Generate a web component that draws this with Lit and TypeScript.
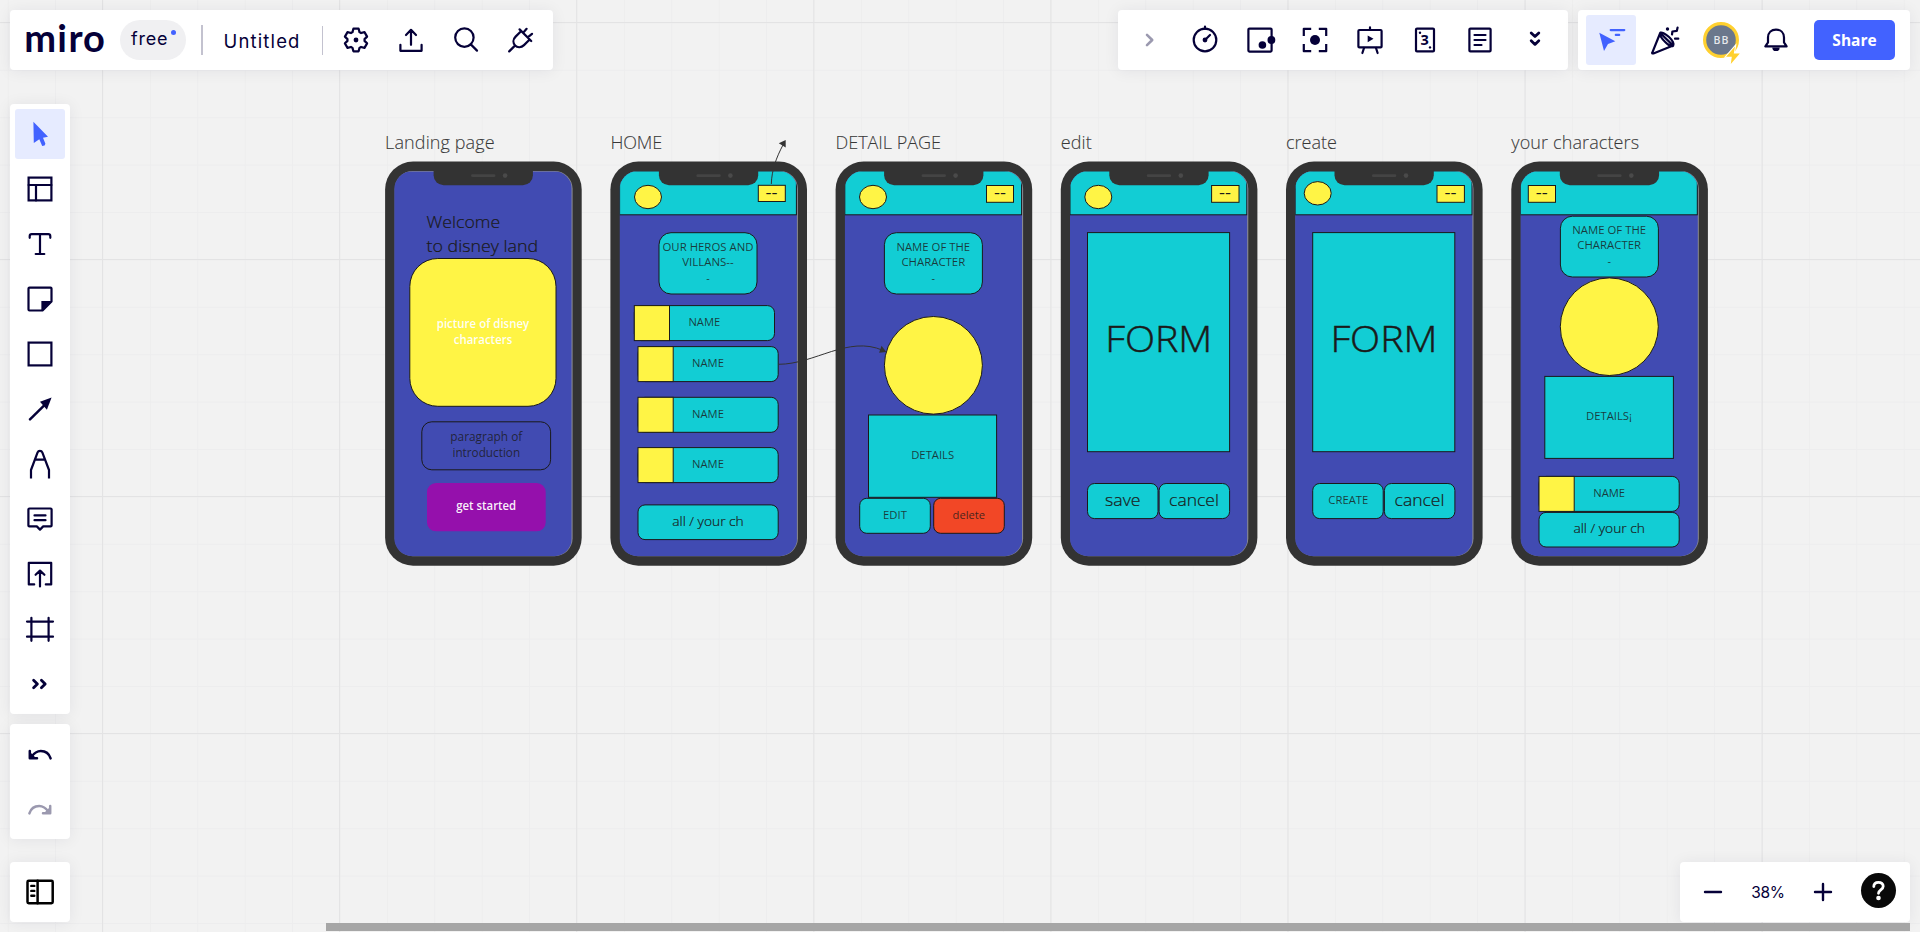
import { LitElement, html, svg, css, nothing } from "lit";
import { customElement } from "lit/decorators.js";

const CYAN = "#12cdd4";
const YELLOW = "#fff445";
const RED = "#f24726";
const PURPLE = "#9510ac";

interface Shape {
  kind: "rect" | "ellipse";
  x: number;
  y: number;
  w: number;
  h: number;
  r?: number;
  fill: string;
  plain?: boolean;
}

interface Label {
  text: string;
  x: number;
  y: number;
  w?: number;
  size: number;
  cls?: string;
}

interface Phone {
  x: number;
  title: string;
  titleWidth: number;
  header: boolean;
  shapes: Shape[];
  labels: Label[];
}

const rect = (x: number, y: number, x2: number, y2: number, r: number, fill: string, plain = false): Shape =>
  ({ kind: "rect", x, y, w: x2 - x, h: y2 - y, r, fill, plain });

const oval = (cx: number, cy: number, rx: number, ry: number): Shape =>
  ({ kind: "ellipse", x: cx, y: cy, w: rx, h: ry, fill: YELLOW });

const t = (text: string, x: number, y: number, w: number, size: number, cls = ""): Label => ({ text, x, y, w, size, cls });

const dashes = (x: number, y = 197.6): Label => t("--", x, y, 12, 16, "bold");

const row = (x: number, y: number): Shape[] => [
  rect(x, y, x + 140.2, y + 35, 7, CYAN),
  rect(x, y, x + 35.2, y + 35, 0, YELLOW),
];

const PHONES: Phone[] = [
  {
    x: 385.1, title: "Landing page", titleWidth: 109.5, header: false,
    shapes: [
      rect(409.8, 258.5, 556, 406.3, 28, YELLOW),
      rect(421.8, 421.8, 550.6, 469.8, 10, "none"),
      rect(427, 483, 545.7, 531.3, 9, PURPLE, true),
    ],
    labels: [
      t("Welcome", 426.6, 227.7, 73.5, 16.8, "start big"),
      t("to disney land", 426.6, 252.1, 111.5, 16.8, "start big"),
      t("picture of disney", 483, 328, 92.5, 11.8, "white"),
      t("characters", 483, 344, 58.5, 11.8, "white"),
      t("paragraph of", 486.3, 441, 72, 11.8),
      t("introduction", 486.3, 457, 67.7, 11.8),
      t("get started", 486.2, 510, 60, 11.8, "white"),
    ],
  },
  {
    x: 610.4, title: "HOME", titleWidth: 51.8, header: true,
    shapes: [
      oval(648, 197, 13.5, 11.7),
      rect(758.3, 185.3, 785.3, 201.5, 0, YELLOW),
      rect(659, 232.7, 757, 294, 12, CYAN),
      ...row(634.3, 305.6),
      ...row(638, 346.6),
      ...row(638, 397.3),
      ...row(638, 447.6),
      rect(638, 504.9, 778.2, 539.6, 7, CYAN),
    ],
    labels: [
      dashes(771.5),
      t("OUR HEROS AND", 708, 251, 91, 11.2),
      t("VILLANS--", 708, 266, 51.5, 11.2),
      t("-", 708, 282, 3.5, 11),
      t("NAME", 704.3, 326, 31.8, 11.2),
      t("NAME", 708, 367, 31.8, 11.2),
      t("NAME", 708, 417.7, 31.8, 11.2),
      t("NAME", 708, 467.7, 31.8, 11.2),
      t("all / your ch", 708, 525.7, 71.5, 13.2, "big"),
    ],
  },
  {
    x: 835.6, title: "DETAIL PAGE", titleWidth: 105.3, header: true,
    shapes: [
      oval(873, 197, 13.5, 11.7),
      rect(986.5, 185.5, 1013.5, 202.3, 0, YELLOW),
      rect(884.4, 232.7, 982.4, 294, 12, CYAN),
      oval(933.4, 365.3, 49, 48.8),
      rect(868.5, 415, 996.6, 497.3, 0, CYAN),
      rect(859.7, 498.3, 930.3, 533.3, 7, CYAN),
      rect(933.7, 498.3, 1004.3, 533.3, 7, RED),
    ],
    labels: [
      dashes(1000),
      t("NAME OF THE", 933.3, 251, 73.8, 11.2),
      t("CHARACTER", 933.3, 266, 63.8, 11.2),
      t("-", 933.3, 282, 3.5, 11),
      t("DETAILS", 932.7, 459, 43, 11.2),
      t("EDIT", 895, 519, 23.8, 11.2),
      t("delete", 968.8, 519, 32.5, 11.6),
    ],
  },
  {
    x: 1060.8, title: "edit", titleWidth: 31, header: true,
    shapes: [
      oval(1098.3, 197, 13.5, 11.7),
      rect(1211.6, 185.5, 1239, 202.3, 0, YELLOW),
      rect(1087.5, 232.6, 1229.6, 451.7, 0, CYAN),
      rect(1087.5, 483.5, 1158, 518.6, 7, CYAN),
      rect(1159.1, 483.5, 1229.6, 518.6, 7, CYAN),
    ],
    labels: [
      dashes(1225),
      t("FORM", 1158.7, 351.7, 107, 37.4, "form"),
      t("save", 1122.8, 506, 35.5, 16.4, "big"),
      t("cancel", 1194, 506, 49.8, 16.4, "big"),
    ],
  },
  {
    x: 1286, title: "create", titleWidth: 50.8, header: true,
    shapes: [
      oval(1317.7, 193.3, 13.5, 11.7),
      rect(1437, 185.5, 1464.4, 202.3, 0, YELLOW),
      rect(1312.7, 232.6, 1454.8, 451.7, 0, CYAN),
      rect(1312.7, 483.5, 1383.2, 518.6, 7, CYAN),
      rect(1384.4, 483.5, 1454.9, 518.6, 7, CYAN),
    ],
    labels: [
      dashes(1450.5),
      t("FORM", 1383.9, 351.7, 107, 37.4, "form"),
      t("CREATE", 1348.3, 504, 40, 11.2),
      t("cancel", 1419.5, 506, 49.8, 16.4, "big"),
    ],
  },
  {
    x: 1511.3, title: "your characters", titleWidth: 127.8, header: true,
    shapes: [
      rect(1528.3, 185.5, 1555.5, 202.3, 0, YELLOW),
      rect(1560.4, 216.2, 1658.4, 277, 12, CYAN),
      oval(1609.3, 326.7, 49, 48.8),
      rect(1544.8, 376.4, 1673.4, 458.4, 0, CYAN),
      ...row(1539, 476.4),
      rect(1539, 512.4, 1679.2, 547, 7, CYAN),
    ],
    labels: [
      dashes(1541.8),
      t("NAME OF THE", 1609.2, 234, 73.8, 11.2),
      t("CHARACTER", 1609.2, 249, 63.8, 11.2),
      t("-", 1609.2, 265, 3.5, 11),
      t("DETAILS¡", 1609, 420, 46, 11.2),
      t("NAME", 1609.2, 497, 31.8, 11.2),
      t("all / your ch", 1609.2, 532.7, 71.5, 13.2, "big"),
    ],
  },
];

const gear = (): string => {
  const pts: string[] = [];
  for (let i = 0; i < 6; i++) {
    for (const [a, r] of [[-24, 8.6], [-13, 11.6], [13, 11.6], [24, 8.6]]) {
      const rad = ((i * 60 + a - 90) * Math.PI) / 180;
      pts.push(`${(16 + r * Math.cos(rad)).toFixed(2)} ${(16 + r * Math.sin(rad)).toFixed(2)}`);
    }
  }
  return `M${pts.join("L")}Z`;
};

const ICONS = {
  gear: svg`<path d=${gear()}/><circle class="f" cx="16" cy="16" r="2.4"/>`,
  export: svg`<path d="M16 20.8V6M11 11l5-5.2L21 11M5.4 20.8v6h21.2v-6"/>`,
  search: svg`<circle cx="14.4" cy="13.6" r="9.2"/><path d="M20.800 20.400l6.200 6.200"/>`,
  plug: svg`<path d="M4.200 27.400l5-5M14.600 5.400L26.200 17M16 7.200l-5.400 5.400c-2.600 2.600-2.800 6.400-.5 8.900s6.200 2.300 8.900-.4l5.400-5.400M18.400 8.400l3.200-3.600M23 13.200l4-3.400"/>`,
  chevron: svg`<path stroke-width="2.6" d="M13 10.800l5.200 5.200-5.200 5.200"/>`,
  timer: svg`<circle cx="16" cy="16" r="11.3"/><path d="M16 5V2.600M16 16l5-5"/><circle class="f" cx="16" cy="16" r="2.400"/>`,
  view: svg`<rect x="4.400" y="4.600" width="23.200" height="23" rx="1"/><circle class="f" cx="18.400" cy="21" r="3.800"/><circle class="f" cx="27.400" cy="16" r="3.900"/>`,
  capture: svg`<path d="M4.800 12V4.800H12.200M19.800 4.800h7.400V12M27.200 20v7.200h-7.400M12.200 27.200H4.800V20" stroke-linecap="butt"/><circle class="f" cx="16" cy="16" r="5"/>`,
  present: svg`<rect x="4.400" y="6" width="23.200" height="17.400" rx="1"/><path d="M16 5.500V3.400M10 24l-1.600 5M22 24l1.600 5"/><path class="f" d="M13.700 11.500l5.800 3.300-5.800 3.400z"/>`,
  card: svg`<rect x="7" y="4.600" width="18" height="22.800" rx="1"/><text class="three" x="15.700" y="21.200">3</text><circle class="f" cx="11" cy="8.700" r="1.200"/><circle class="f" cx="21" cy="23.400" r="1.200"/>`,
  note: svg`<rect x="5.400" y="4.600" width="21.200" height="22.800" rx="1"/><path d="M10.500 11h11M10.500 16h11M10.500 21h7"/>`,
  down: svg`<path stroke-width="2.8" d="M12.200 9l3.800 3.600L19.800 9M12.200 16.800l3.800 3.600 3.800-3.600"/>`,
  follow: svg`<path class="f" d="M4.300 8.700l16 8.600-7.300 2.800L9 27z"/><path d="M15.700 6.100h13.600M20.800 10.900h3.400"/>`,
  party: svg`<path d="M3.200 28.800L11.200 9l13 12.600L4.400 29.400c-.8.300-1.500 0-1.200-.6zM11.200 9c1-1.500 5.200.6 8.800 4s5.400 7.200 4.200 8.600M11.200 9c-.8 1.700 1.400 5.400 5 9s6.800 4.800 8 3.600"/><circle class="f" cx="18.500" cy="5" r="1.700"/><path d="M23 10.500l.4-3 4.400-.6.8-3.400M26 14.700h3.300"/>`,
  bell: svg`<path d="M5.400 22.400h21.200l-2.600-4v-4.800c0-4.900-3.400-8-8-8s-8 3.100-8 8v4.800z"/><path class="f" d="M12.300 23.400h7.400a3.700 3.700 0 0 1-7.400 0z"/>`,
  cursor: svg`<path class="f" d="M9.400 3.800l14.600 15-5 .9 2.400 6-.8 1.900-2.400.4-2.900-6.700-5.500 3.700z"/>`,
  template: svg`<rect x="4.600" y="4.600" width="22.800" height="22.800" stroke-linejoin="miter"/><path d="M4.600 12h22.800M12 12v15.400"/>`,
  text: svg`<path d="M5.700 9.800V8.200c0-1.400.6-2.100 2-2.100h16.600c1.400 0 2 .7 2 2.100v1.600M16 6.200V26M11.700 26h8.600"/>`,
  sticky: svg`<path d="M5.500 4.600h21c.6 0 1 .4 1 1v12.900l-9 9h-13c-.6 0-1-.4-1-1V5.600c0-.6.4-1 1-1z"/><path class="f" d="M17.400 18h10l-10 9.800z"/>`,
  square: svg`<rect x="4.600" y="4.600" width="22.800" height="22.800" stroke-linejoin="miter"/>`,
  arrow: svg`<path stroke-width="2.500" d="M6 26.400L22 10.600"/><path class="f" d="M27.600 4.400l-11.600 4.400 6.900 7.900z"/>`,
  pen: svg`<path stroke-linecap="butt" d="M7 30.600V22l6.600-17.600c.8-2 3.900-2 4.700 0L25 22v8.600M11 11.700h10"/>`,
  comment: svg`<path d="M5.400 5.500h21.200c.6 0 1 .4 1 1v15.900c0 .6-.4 1-1 1h-7.400L16 26.600l-3.200-3.200H5.400c-.6 0-1-.4-1-1V6.500c0-.6.4-1 1-1z"/><path d="M10.500 12.400h11M10.500 17.200h11"/>`,
  upload: svg`<path d="M10.200 26.400H4.800V4.800h22.400v21.600h-5.400M16 28.500V13M11.600 16.800L16 12.600l4.400 4.200"/>`,
  frame: svg`<path d="M7.400 4.800v23M24.600 4.800v23M3 8.600h26M3 23.700h26"/>`,
  more: svg`<path stroke-width="2.8" d="M9.600 12.200l3.800 3.800-3.800 3.800M17.400 12.200l3.800 3.800-3.800 3.800"/>`,
  undo: svg`<path d="M26.600 19.400c-1.500-4.800-5.400-7.400-9.800-7.400-3.800 0-6.800 2.200-9.600 6M5.800 12v7.200h7.200" stroke-width="2.500"/><path class="f" d="M6 13v6.200h6.200z"/>`,
  redo: svg`<path d="M5.400 19.400c1.500-4.800 5.400-7.400 9.800-7.400 3.800 0 6.800 2.200 9.600 6M26.200 12v7.200h-7.200" stroke-width="2.500"/><path class="f" d="M26 13v6.200h-6.200z"/>`,
  panel: svg`<rect x="3.500" y="4.700" width="25.200" height="22.600" rx="1.200" stroke-width="2.500"/><path d="M13.600 4.700v22.600" stroke-width="2.500"/><path d="M7.300 9.900h3M7.300 14.900h3M7.300 19.800h3" stroke-width="2.400"/>`,
  minus: svg`<path d="M8 16h16" stroke-width="2.400"/>`,
  plus: svg`<path d="M8 16h16M16 8v16" stroke-width="2.400"/>`,
};

type IconName = keyof typeof ICONS;

const icon = (name: IconName) => html`<svg class="icon" viewBox="0 0 32 32" width="32" height="32">${ICONS[name]}</svg>`;

@customElement("board-canvas")
class BoardCanvas extends LitElement {
  static styles = css`
    :host { display: block; width: 100%; height: 100%; }
    svg { display: block; }
    text { font-family: "Open Sans", "Noto Sans", sans-serif; fill: #1a1a1a; text-anchor: middle; fill-opacity: 0.82; font-weight: 400; }
    .title { font-weight: 300; font-size: 18px; fill: #333; text-anchor: start; fill-opacity: 0.95; stroke: #333; stroke-width: 0.15; }
    .start { text-anchor: start; }
    .big { font-weight: 300; fill-opacity: 1; stroke: #1a1a1a; stroke-width: 0.2; }
    .white { fill: #fff; font-weight: 600; fill-opacity: 0.95; }
    .bold { font-weight: 500; fill-opacity: 1; }
    .form { font-weight: 300; fill-opacity: 1; stroke: #1a1a1a; stroke-width: 0.5; }
    .edge { stroke: #1a1a1a; stroke-width: 1; }
    .link { fill: none; stroke: #333; stroke-width: 1; }
    .head { fill: #333; }
  `;

  private shape(s: Shape) {
    const cls = s.plain ? "" : "edge";
    return s.kind === "rect"
      ? svg`<rect class=${cls} x=${s.x} y=${s.y} width=${s.w} height=${s.h} rx=${s.r ?? 0} fill=${s.fill}/>`
      : svg`<ellipse class=${cls} cx=${s.x} cy=${s.y} rx=${s.w} ry=${s.h} fill=${s.fill}/>`;
  }

  private phone(p: Phone, i: number) {
    const x = p.x;
    return svg`
      <text class="title" x=${x} y="149" textLength=${p.titleWidth}>${p.title}</text>
      <clipPath id=${"screen" + i}><rect x=${x + 9.2} y="171.200" width="177.600" height="385" rx="18"/></clipPath>
      <rect x=${x} y="161.500" width="196.600" height="404.200" rx="28" fill="#333"/>
      <rect x=${x + 9.6} y="171" width="177.900" height="385.200" rx="18" fill="#8c8c92"/>
      <g clip-path=${`url(#screen${i})`}>
        <rect x=${x + 9} y="171.400" width="177.500" height="385" fill="#414bb2"/>
        ${p.header ? svg`<rect class="edge" x=${x + 9.2} y="171" width="176.800" height="43.800" fill=${CYAN}/>` : nothing}
      </g>
      <path d="M${x + 48.5} 170v5.300a10 10 0 0 0 10 10h79.300a10 10 0 0 0 10-10V170z" fill="#333"/>
      <rect x=${x + 86} y="174.300" width="24.300" height="2.700" rx="1.300" fill="#444"/>
      <circle cx=${x + 120} cy="175.600" r="2.300" fill="#4a4a4a"/>
      ${p.shapes.map((s) => this.shape(s))}
      ${p.labels.map((l) => svg`<text class=${l.cls ?? ""} x=${l.x} y=${l.y} font-size=${l.size} textLength=${l.w ?? nothing} lengthAdjust="spacingAndGlyphs">${l.text}</text>`)}`;
  }

  render() {
    return html`<svg width="1920" height="932" viewBox="0 0 1920 932">
      <defs>
        <pattern id="minor" x="7.700" y="22.400" width="47.400" height="47.400" patternUnits="userSpaceOnUse">
          <path d="M0 .5H47.400M.5 0V47.400" stroke="#ededee" stroke-width="1" fill="none"/>
        </pattern>
      </defs>
      <rect width="1920" height="932" fill="#f2f2f2"/>
      <rect width="1920" height="932" fill="url(#minor)"/>
      ${[0, 1, 2, 3, 4, 5, 6, 7].map((k) => svg`<path d="M${102.5 + 237.1 * k} 0V932" stroke="#e3e3e4"/>`)}
      ${[0, 1, 2, 3].map((k) => svg`<path d="M0 ${22.5 + 237 * k}H1920" stroke="#e3e3e4"/>`)}
      ${PHONES.map((p, i) => this.phone(p, i))}
      <path class="link" d="M771.300 184C771.800 170 776 158 783.500 144"/>
      <path class="head" d="M785.700 140l-6.900 3.300 6.900 4.300z"/>
      <path class="link" d="M778.500 364.300C815 364.300 848 335 883 350.400"/>
      <path class="head" d="M886.300 352l-4.800-6.300-2.400 7.100z"/>
    </svg>`;
  }
}

@customElement("app-root")
class AppRoot extends LitElement {
  static styles = css`
    :host {
      display: block; position: relative; width: 1920px; height: 932px; overflow: hidden;
      font-family: Inter, "Open Sans", sans-serif; color: #050038; --ink: #050038;
    }
    .board { position: absolute; inset: 0; }
    .chrome { position: relative; height: 932px; box-sizing: border-box; padding: 10px 10px 0; display: flex; flex-direction: column; }
    .card { background: #fff; border-radius: 4px; box-shadow: 0 1px 16px rgba(5, 0, 56, 0.07); display: flex; align-items: center; box-sizing: border-box; }
    .top { display: flex; height: 60px; }
    .file { width: 543px; padding-left: 10px; }
    .tools { width: 450px; margin-left: auto; padding-left: 4.5px; }
    .people { width: 332px; margin-left: 10px; padding-left: 7.5px; }
    .logo { width: 100px; height: 60px; display: block; overflow: visible; }
    .logo text { font: 700 38px Lato, sans-serif; fill: var(--ink); }
    .plan { width: 66px; height: 40px; border-radius: 20px; background: #f0f0f2; font-size: 18px; line-height: 37px; box-sizing: border-box; padding-left: 11px; position: relative; letter-spacing: 0.8px; }
    .plan::after { content: ""; position: absolute; width: 5px; height: 5px; border-radius: 50%; background: #4262ff; left: 51px; top: 10px; }
    .rule { width: 1.5px; height: 30px; background: #c3c2cf; margin: 0 21px 0 15px; }
    .rule.two { width: 1px; margin: 0 5px 0 20.5px; height: 29px; }
    .name { font-size: 18.5px; width: 78px; white-space: nowrap; padding-top: 2px; letter-spacing: 1.15px; }
    .icon { display: block; fill: none; stroke: currentColor; stroke-width: 2.2; stroke-linecap: round; stroke-linejoin: round; }
    .icon .f { fill: currentColor; stroke: none; }
    .three { font: 700 14.5px "Noto Sans", sans-serif; fill: currentColor; stroke: none; text-anchor: middle; }
    .cell { width: 55px; height: 55px; display: grid; place-items: center; flex: none; }
    .muted { color: #9b99af; }
    .on { width: 50px; height: 50px; background: #e6ebff; color: #4262ff; border-radius: 3px; display: grid; place-items: center; flex: none; }
    .people .party { margin-left: 2px; }
    .people .avatar { margin-left: 1px; }
    .bolt { fill: #ffd02f; stroke: #fff; stroke-width: 2; paint-order: stroke; }
    .initials { font: 600 10.5px "Open Sans", sans-serif; fill: #e6e8ec; text-anchor: middle; letter-spacing: 1px; }
    .share { width: 81px; height: 40px; border-radius: 5px; background: #4262ff; color: #fff; font: 700 15.5px/41px "Open Sans", sans-serif; text-align: center; margin-left: 10.5px; }
    .side { width: 60px; flex-direction: column; }
    .palette { margin-top: 34px; height: 610px; padding-top: 2.5px; }
    .history { margin-top: 10px; height: 115px; padding-top: 3px; }
    .bottom { display: flex; justify-content: space-between; margin-top: 23px; height: 60px; }
    .pages { justify-content: center; color: #000; }
    .zoom { width: 230px; padding-left: 5.5px; }
    .level { width: 55px; text-align: center; font-size: 15.5px; letter-spacing: -0.3px; }
    .help { width: 35px; height: 35px; margin: -3px 0 0 10.5px; border-radius: 50%; background: #090909; display: grid; place-items: center; }
    .help svg { display: block; }
    .scroll { width: 1584px; height: 8px; margin: 1px 0 0 316px; background: #a6a6a6; }
  `;

  render() {
    const palette: IconName[] = ["template", "text", "sticky", "square", "arrow", "pen", "comment", "upload", "frame", "more"];
    return html`
      <board-canvas class="board"></board-canvas>
      <div class="chrome">
        <div class="top">
          <div class="card file">
            <svg class="logo" viewBox="0 0 100 60"><text x="4.200 37.200 48.400 62.900" y="41.500">miro</text></svg>
            <div class="plan">free</div>
            <div class="rule"></div>
            <div class="name">Untitled</div>
            <div class="rule two"></div>
            ${(["gear", "export", "search", "plug"] as IconName[]).map((n) => html`<div class="cell">${icon(n)}</div>`)}
          </div>
          <div class="card tools">
            <div class="cell muted">${icon("chevron")}</div>
            ${(["timer", "view", "capture", "present", "card", "note", "down"] as IconName[]).map((n) => html`<div class="cell">${icon(n)}</div>`)}
          </div>
          <div class="card people">
            <div class="on">${icon("follow")}</div>
            <div class="cell party">${icon("party")}</div>
            <div class="cell avatar">
              <svg width="48" height="48" viewBox="0 0 48 48">
                <circle cx="24" cy="24" r="16.400" fill="#6b778c" stroke="#ffd02f" stroke-width="3.200"/>
                <text class="initials" x="24.500" y="28">BB</text>
                <path class="bolt" d="M38 30.500l-9 10.300h5.800l-1 7.200 9-10.600h-6z"/>
              </svg>
            </div>
            <div class="cell">${icon("bell")}</div>
            <div class="share">Share</div>
          </div>
        </div>
        <div class="card side palette">
          <div class="cell"><div class="on">${icon("cursor")}</div></div>
          ${palette.map((n) => html`<div class="cell">${icon(n)}</div>`)}
        </div>
        <div class="card side history">
          <div class="cell">${icon("undo")}</div>
          <div class="cell muted">${icon("redo")}</div>
        </div>
        <div class="bottom">
          <div class="card side pages">${icon("panel")}</div>
          <div class="card zoom">
            <div class="cell">${icon("minus")}</div>
            <div class="level">38%</div>
            <div class="cell">${icon("plus")}</div>
            <div class="help">
              <svg width="35" height="35" viewBox="0 0 35 35"><path d="M12.800 13.500c0-2.700 2-4.200 4.700-4.200s4.700 1.600 4.700 4c0 3.500-4.700 3.600-4.700 7" fill="none" stroke="#fff" stroke-width="2.800" stroke-linecap="round"/><circle cx="17.500" cy="25" r="2.300" fill="#fff"/></svg>
            </div>
          </div>
        </div>
        <div class="scroll"></div>
      </div>`;
  }
}
